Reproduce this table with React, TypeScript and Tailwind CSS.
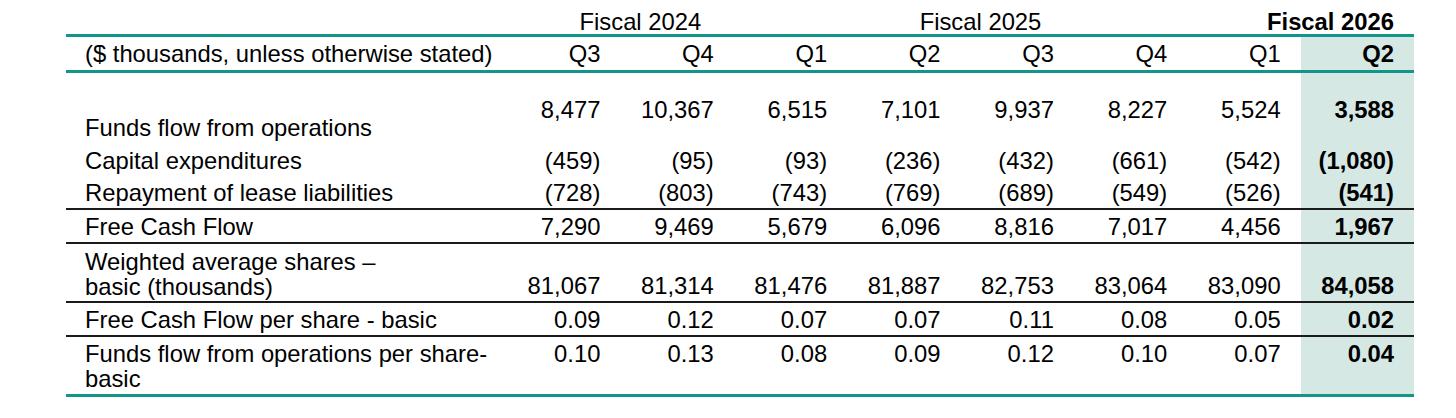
import React from "react";

const COLS = "grid grid-cols-[441px_repeat(8,minmax(0,1fr))]";
const HL = "bg-[#d5e8e4]";

type Row = {
  label: string[];
  vals: string[];
  h: string;
  border: string;
  labelAlign: string;
  numAlign: string;
};

const rows: Row[] = [
  {
    label: ["Funds flow from operations"],
    vals: ["8,477", "10,367", "6,515", "7,101", "9,937", "8,227", "5,524", "3,588"],
    h: "h-[71px]",
    border: "",
    labelAlign: "items-end pb-[4px]",
    numAlign: "items-start pt-[24px]",
  },
  {
    label: ["Capital expenditures"],
    vals: ["(459)", "(95)", "(93)", "(236)", "(432)", "(661)", "(542)", "(1,080)"],
    h: "h-[32px]",
    border: "",
    labelAlign: "items-center",
    numAlign: "items-center",
  },
  {
    label: ["Repayment of lease liabilities"],
    vals: ["(728)", "(803)", "(743)", "(769)", "(689)", "(549)", "(526)", "(541)"],
    h: "h-[34px]",
    border: "border-b-2 border-[#1a1a1a]",
    labelAlign: "items-center",
    numAlign: "items-center",
  },
  {
    label: ["Free Cash Flow"],
    vals: ["7,290", "9,469", "5,679", "6,096", "8,816", "7,017", "4,456", "1,967"],
    h: "h-[34px]",
    border: "border-b-2 border-[#1a1a1a]",
    labelAlign: "items-center",
    numAlign: "items-center",
  },
  {
    label: ["Weighted average shares \u2013", "basic (thousands)"],
    vals: ["81,067", "81,314", "81,476", "81,887", "82,753", "83,064", "83,090", "84,058"],
    h: "h-[59px]",
    border: "border-b-2 border-[#1a1a1a]",
    labelAlign: "items-start pt-[5px]",
    numAlign: "items-end pb-[3px]",
  },
  {
    label: ["Free Cash Flow per share - basic"],
    vals: ["0.09", "0.12", "0.07", "0.07", "0.11", "0.08", "0.05", "0.02"],
    h: "h-[34px]",
    border: "border-b-2 border-[#1a1a1a]",
    labelAlign: "items-center",
    numAlign: "items-center",
  },
  {
    label: ["Funds flow from operations per share-", "basic"],
    vals: ["0.10", "0.13", "0.08", "0.09", "0.12", "0.10", "0.07", "0.04"],
    h: "h-[60px]",
    border: "border-b-[3px] border-[#14958b]",
    labelAlign: "items-start pt-[4px]",
    numAlign: "items-start pt-[4px]",
  },
];

export default function App() {
  return (
    <div className="w-[1456px] h-[418px] bg-white text-black text-[23.8px] leading-[25px] font-['Liberation_Sans',Arial,sans-serif]">
      <div className="ml-[66px] w-[1348px]">
        {/* fiscal year row */}
        <div className={`${COLS} h-[34px]`}>
          <div />
          <div className="col-span-2 pl-[40px] pt-[9px] text-center">Fiscal 2024</div>
          <div className="col-span-4 pl-[40px] pt-[9px] text-center">Fiscal 2025</div>
          <div className="col-span-2 pr-[20px] pt-[9px] text-right font-bold">Fiscal 2026</div>
        </div>
        {/* quarter header */}
        <div className={`${COLS} h-[39px] border-y-[3px] border-[#14958b]`}>
          <div className="flex items-center pl-[19px]">($ thousands, unless otherwise stated)</div>
          {["Q3", "Q4", "Q1", "Q2", "Q3", "Q4", "Q1"].map((q, i) => (
            <div key={i} className="flex items-center justify-end pr-[20px]">
              {q}
            </div>
          ))}
          <div className={`flex items-center justify-end pr-[20px] font-bold ${HL}`}>Q2</div>
        </div>
        {rows.map((r, ri) => (
          <div key={ri} className={`${COLS} ${r.h} ${r.border}`}>
            <div className={`flex ${r.labelAlign} pl-[19px]`}>
              <div>
                {r.label.map((l, li) => (
                  <div key={li}>{l}</div>
                ))}
              </div>
            </div>
            {r.vals.map((v, vi) => (
              <div
                key={vi}
                className={`flex ${r.numAlign} justify-end pr-[20px] ${
                  vi === 7 ? `${HL} font-bold` : ""
                }`}
              >
                {v}
              </div>
            ))}
          </div>
        ))}
      </div>
    </div>
  );
}
